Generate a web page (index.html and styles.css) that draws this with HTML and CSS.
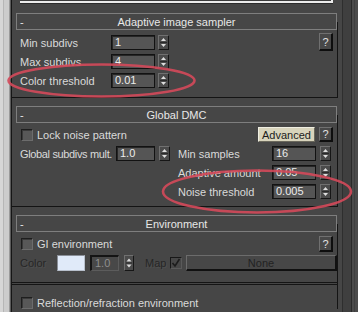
FILE: index.html
```html
<!DOCTYPE html>
<html>
<head>
<meta charset="utf-8">
<link rel="stylesheet" href="styles.css">
</head>
<body>
<div class="screen">
  <div class="leftstrip"></div>
  <div class="main">
    <div class="topbox"></div>

    <section class="rollout first">
      <div class="head"><span class="minus">-</span><span class="title">Adaptive image sampler</span><span></span></div>
      <div class="body b1">
        <div class="rows">
          <div class="row"><span class="lbl w91">Min subdivs</span><span class="field w44">1</span><span class="spin ml3"><svg width="9" height="13" viewBox="0 0 9 13"><path d="M2 5h5L4.5 2z" fill="#dedede"/><path d="M2 8h5L4.5 11z" fill="#dedede"/><path d="M1 6.5h7" stroke="#2a2a2a"/></svg></span></div>
          <div class="row"><span class="lbl w91">Max subdivs</span><span class="field w44">4</span><span class="spin ml3"><svg width="9" height="13" viewBox="0 0 9 13"><path d="M2 5h5L4.5 2z" fill="#dedede"/><path d="M2 8h5L4.5 11z" fill="#dedede"/><path d="M1 6.5h7" stroke="#2a2a2a"/></svg></span></div>
          <div class="row"><span class="lbl w91">Color threshold</span><span class="field w44">0.01</span><span class="spin ml3"><svg width="9" height="13" viewBox="0 0 9 13"><path d="M2 5h5L4.5 2z" fill="#dedede"/><path d="M2 8h5L4.5 11z" fill="#dedede"/><path d="M1 6.5h7" stroke="#2a2a2a"/></svg></span></div>
        </div>
        <span class="help h18">?</span>
      </div>
    </section>

    <section class="rollout">
      <div class="head"><span class="minus">-</span><span class="title">Global DMC</span><span></span></div>
      <div class="body b2">
        <div class="row">
          <span class="check"></span><span class="cklbl">Lock noise pattern</span>
          <span class="adv">Advanced</span><span class="help h15">?</span>
        </div>
        <div class="grid">
          <div class="col">
            <div class="row"><span class="lbl w96 tight">Global subdivs mult.</span><span class="field w39">1.0</span><span class="spin ml4"><svg width="9" height="13" viewBox="0 0 9 13"><path d="M2 5h5L4.5 2z" fill="#dedede"/><path d="M2 8h5L4.5 11z" fill="#dedede"/><path d="M1 6.5h7" stroke="#2a2a2a"/></svg></span></div>
          </div>
          <div class="col">
            <div class="row"><span class="lbl w94">Min samples</span><span class="field w44">16</span><span class="spin ml4"><svg width="9" height="13" viewBox="0 0 9 13"><path d="M2 5h5L4.5 2z" fill="#dedede"/><path d="M2 8h5L4.5 11z" fill="#dedede"/><path d="M1 6.5h7" stroke="#2a2a2a"/></svg></span></div>
            <div class="row"><span class="lbl w94">Adaptive amount</span><span class="field w44">0.05</span><span class="spin ml4"><svg width="9" height="13" viewBox="0 0 9 13"><path d="M2 5h5L4.5 2z" fill="#dedede"/><path d="M2 8h5L4.5 11z" fill="#dedede"/><path d="M1 6.5h7" stroke="#2a2a2a"/></svg></span></div>
            <div class="row"><span class="lbl w94">Noise threshold</span><span class="field w44">0.005</span><span class="spin ml4"><svg width="9" height="13" viewBox="0 0 9 13"><path d="M2 5h5L4.5 2z" fill="#dedede"/><path d="M2 8h5L4.5 11z" fill="#dedede"/><path d="M1 6.5h7" stroke="#2a2a2a"/></svg></span></div>
          </div>
        </div>
      </div>
    </section>

    <section class="rollout open">
      <div class="head"><span class="minus">-</span><span class="title">Environment</span><span></span></div>
      <div class="body b3">
        <div class="row r16">
          <span class="check"></span><span class="cklbl">GI environment</span>
          <span class="help h16 mlauto">?</span>
        </div>
        <div class="row r16 rowb">
          <span class="lbl w37 dis">Color</span>
          <span class="swatch"></span>
          <span class="field dfield w29">1.0</span>
          <span class="spin sp16 ml5"><svg width="8" height="14" viewBox="0 0 8 14"><path d="M1.5 5.5h5L4 2.5z" fill="#dedede"/><path d="M1.5 8.5h5L4 11.5z" fill="#dedede"/><path d="M1 7h6" stroke="#2a2a2a"/></svg></span>
          <span class="lbl w25 dis ml11">Map</span>
          <span class="check dcheck"><svg width="10" height="10" viewBox="0 0 10 10"><path d="M1.5 5l2.5 3 4.5-7" fill="none" stroke="#1c1c1c" stroke-width="1.6"/></svg></span>
          <span class="none">None</span>
        </div>
        <div class="sep"></div>
        <div class="row r12">
          <span class="check"></span><span class="cklbl">Reflection/refraction environment</span>
        </div>
      </div>
    </section>
  </div>
  <div class="scroll"></div>

  <svg class="marks" width="358" height="312" viewBox="0 0 358 312">
    <ellipse cx="101.5" cy="80.5" rx="93" ry="16" fill="none" stroke="#d4495a" stroke-width="2.6" stroke-opacity="0.9"/>
    <ellipse cx="257" cy="191.5" rx="94" ry="21" fill="none" stroke="#d4495a" stroke-width="2.6" stroke-opacity="0.9"/>
  </svg>
</div>
</body>
</html>
```

FILE: styles.css
```css
* { box-sizing: border-box; margin: 0; padding: 0; }
html, body { width: 358px; height: 312px; overflow: hidden; }
body {
  background: #464646;
  font-family: "Liberation Sans", Arial, sans-serif;
  font-size: 11px;
  color: #dadada;
}
.screen { position: relative; display: flex; width: 358px; height: 312px; }
.leftstrip {
  width: 11px; flex: none;
  background: linear-gradient(to right, #d6d6d6 0 3px, #b6b6b6 3px 4px, #cccccc 4px 9px, #9a9a9a 9px 10px, #5a5a5a 10px 11px);
}
.main { width: 329px; flex: none; border-left: 1px solid #161616; }
.scroll {
  width: 18px; flex: none;
  background: linear-gradient(to right, #464646 0 2px, #2e2e2e 2px 3px, #3f3f3f 3px 11px, #2a2a2a 11px 12px, #4b4b4b 12px 14px, #3f3f3f 14px 15px, #4b4b4b 15px 18px);
}
.topbox {
  margin-left: 8px; width: 313px; height: 3px;
  background: #3c3c3c;
  border-bottom: 2px solid #ececec; border-right: 2px solid #ececec;
  box-shadow: 0 1px 0 #2c2c2c;
}
.rollout {
  width: 326px; margin-top: 8px;
  border-bottom: 1px solid #141414;
  background: linear-gradient(#141414, #141414) right 0 top 9px / 1px calc(100% - 9px) no-repeat;
}
.rollout.first { margin-top: 10px; }
.rollout.open { border-bottom: none; }
.head {
  margin-left: 4px; width: 321px; height: 17px;
  border: 1px solid #7e7e7e;
  display: grid; grid-template-columns: 1fr auto 1fr; align-items: center;
  color: #e8e8e8;
}
.minus { padding-left: 3px; }
.body { padding: 3px 5px 9px 8px; }
.b1 { display: flex; justify-content: space-between; align-items: flex-start; }
.b1 .rows { margin-top: 2px; display: flex; flex-direction: column; gap: 4px; }
.b2 { padding: 4px 5px 7px 8px; }
.b3 { padding: 4px 5px 0 8px; }
.row { display: flex; align-items: center; height: 15px; }
.r16 { height: 16px; }
.r12 { height: 12px; margin-top: 12px; }
.rowb { margin-top: 3px; margin-right: -4px; }
.grid { display: grid; grid-template-columns: 158px 1fr; margin-top: 4px; }
.col { display: flex; flex-direction: column; gap: 4px; }
.lbl { flex: none; white-space: nowrap; }
.tight { letter-spacing: -0.35px; }
.w91 { width: 91px; } .w96 { width: 96px; } .w94 { width: 94px; } .w37 { width: 37px; } .w25 { width: 25px; }
.field {
  flex: none; height: 15px; padding-left: 3px;
  background: #555555; color: #ececec;
  border: 1px solid #121212;
  box-shadow: inset 1px 1px 0 #262626;
  display: flex; align-items: center; line-height: 1;
}
.w44 { width: 44px; } .w39 { width: 39px; } .w29 { width: 29px; }
.dfield {
  height: 16px; background: #484848; color: #8e8e8e;
  border-width: 2px 1px 1px 2px; border-color: #141414 #5c5c5c #5c5c5c #141414;
  box-shadow: none;
}
.spin {
  flex: none; width: 11px; height: 15px;
  background: #4b4b4b;
  border: 1px solid; border-color: #707070 #161616 #161616 #707070;
  display: flex;
}
.sp16 { width: 10px; height: 16px; }
.ml3 { margin-left: 3px; } .ml4 { margin-left: 4px; } .ml5 { margin-left: 5px; } .ml11 { margin-left: 11px; }
.mlauto { margin-left: auto; }
.help {
  flex: none; width: 14px;
  background: #484848; color: #e0e0e0;
  border: 1px solid; border-color: #707070 #0e0e0e #0e0e0e #707070;
  border-right-width: 2px; border-bottom-width: 2px;
  display: flex; align-items: center; justify-content: center;
}
.h18 { height: 18px; } .h15 { height: 15px; } .h16 { height: 16px; }
.check {
  flex: none; width: 12px; height: 12px; margin-left: 1px;
  background: #585858;
  border: 1px solid; border-color: #1e1e1e #6c6c6c #6c6c6c #1e1e1e;
  box-shadow: inset 1px 1px 0 #3a3a3a;
}
.dcheck {
  margin-left: 0; background: #474747;
  display: flex; align-items: center; justify-content: center;
  box-shadow: none; border-color: #181818 #5a5a5a #5a5a5a #181818;
}
.cklbl { margin-left: 4px; white-space: nowrap; }
.adv {
  margin-left: auto; width: 57px; height: 15px;
  background: #d8d4bc; color: #1c1c1c;
  border: 1px solid; border-color: #efeee2 #6a685c #6a685c #efeee2;
  display: flex; align-items: center; justify-content: center;
}
.b2 .row .help { margin-left: 4px; }
.dis { color: #262626; text-shadow: 1px 1px 0 #505050; }
.swatch {
  flex: none; width: 28px; height: 16px;
  background: #e0eaf9;
  border: 1px solid; border-color: #8a8f98 #b8c0cc #b8c0cc #8a8f98;
}
.field.dfield { margin-left: 5px; }
.none {
  flex: 1; margin-left: 4px; height: 16px;
  background: #474747; color: #222222;
  border: 1px solid; border-color: #6c6c6c #111111 #111111 #6c6c6c;
  border-right-width: 2px; border-bottom-width: 2px;
  display: flex; align-items: center; justify-content: center;
}
.sep {
  margin: 11px -5px 0 -8px; height: 3px;
  border-top: 1px solid #151515; border-bottom: 1px solid #151515;
}
.marks { position: absolute; left: 0; top: 0; pointer-events: none; }
```
